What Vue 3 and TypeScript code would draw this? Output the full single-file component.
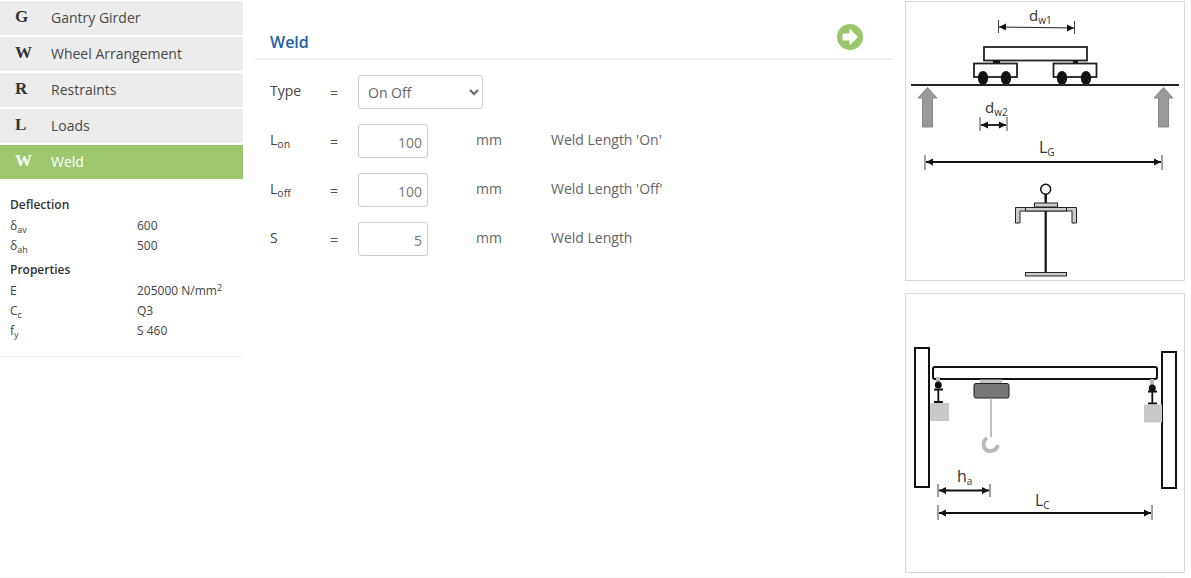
<script setup lang="ts">
type NavItem = { letter: string; label: string; active?: boolean };
type InfoRow = { sym: string; sub?: string; value: string; sup?: string };
type FormRow = { sym: string; sub?: string; value: string; desc: string };

const navItems: NavItem[] = [
  { letter: "G", label: "Gantry Girder" },
  { letter: "W", label: "Wheel Arrangement" },
  { letter: "R", label: "Restraints" },
  { letter: "L", label: "Loads" },
  { letter: "W", label: "Weld", active: true },
];

const deflection: InfoRow[] = [
  { sym: "δ", sub: "av", value: "600" },
  { sym: "δ", sub: "ah", value: "500" },
];

const properties: InfoRow[] = [
  { sym: "E", value: "205000 N/mm", sup: "2" },
  { sym: "C", sub: "c", value: "Q3" },
  { sym: "f", sub: "y", value: "S 460" },
];

const formRows: FormRow[] = [
  { sym: "L", sub: "on", value: "100", desc: "Weld Length 'On'" },
  { sym: "L", sub: "off", value: "100", desc: "Weld Length 'Off'" },
  { sym: "S", value: "5", desc: "Weld Length" },
];
</script>

<template>
  <div class="page">
    <aside class="sidebar">
      <nav class="nav">
        <div
          v-for="item in navItems"
          :key="item.label"
          class="nav-item"
          :class="{ active: item.active }"
        >
          <span class="nav-letter">{{ item.letter }}</span>
          <span>{{ item.label }}</span>
        </div>
      </nav>

      <div class="info">
        <div class="info-title">Deflection</div>
        <div v-for="row in deflection" :key="row.sub" class="info-row">
          <span>{{ row.sym }}<sub>{{ row.sub }}</sub></span>
          <span>{{ row.value }}</span>
        </div>
        <div class="info-title second">Properties</div>
        <div v-for="row in properties" :key="row.sym" class="info-row">
          <span>{{ row.sym }}<sub v-if="row.sub">{{ row.sub }}</sub></span>
          <span>{{ row.value }}<sup v-if="row.sup">{{ row.sup }}</sup></span>
        </div>
      </div>
    </aside>

    <main class="main">
      <header class="main-head">
        <h2>Weld</h2>
        <svg class="next" width="26" height="26" viewBox="0 0 26 26">
          <circle cx="13" cy="13" r="13" fill="#9bc76c" />
          <path
            d="M6 10h7V5.500l7.500 7.500-7.500 7.500V16H6z"
            fill="#fff"
            stroke="#fff"
            stroke-width="1"
            stroke-linejoin="round"
          />
        </svg>
      </header>

      <div class="form">
        <div class="form-row">
          <span class="form-label">Type</span>
          <span class="form-eq">=</span>
          <select class="form-select">
            <option>On Off</option>
          </select>
        </div>
        <div v-for="row in formRows" :key="row.sub ?? row.sym" class="form-row">
          <span class="form-label">{{ row.sym }}<sub v-if="row.sub">{{ row.sub }}</sub></span>
          <span class="form-eq">=</span>
          <input class="form-input" type="text" :value="row.value" />
          <span class="form-unit">mm</span>
          <span class="form-desc">{{ row.desc }}</span>
        </div>
      </div>
    </main>

    <div class="figures">
      <div class="figure">
        <svg viewBox="905 1 280 280" width="280" height="280">
          <defs>
            <marker
              id="tip"
              markerUnits="userSpaceOnUse"
              markerWidth="8"
              markerHeight="8"
              refX="7"
              refY="4"
              orient="auto-start-reverse"
            >
              <path d="M0 0.500L7 4L0 7.500z" fill="#111" />
            </marker>
          </defs>

          <!-- wheel spacing dw1 -->
          <text x="1029" y="21" class="dim">d<tspan class="dim-sub" dy="3">w1</tspan></text>
          <path d="M998.500 20v13M1074.500 21v13" class="tick" />
          <path d="M999 27L1074 28" class="dim-line" marker-start="url(#tip)" marker-end="url(#tip)" />

          <!-- crane on rail -->
          <rect x="984" y="47" width="103" height="13.500" class="outline" />
          <path d="M993 62h7M1073 62h5" stroke="#111" stroke-width="3" />
          <rect x="974" y="63.500" width="43" height="13.500" class="outline" />
          <rect x="1053.500" y="63.500" width="43" height="13.500" class="outline" />
          <ellipse cx="983" cy="78" rx="5.200" ry="7" fill="#111" />
          <ellipse cx="1006" cy="78" rx="5.200" ry="7" fill="#111" />
          <ellipse cx="1062" cy="78" rx="5.200" ry="7" fill="#111" />
          <ellipse cx="1086" cy="78" rx="5.200" ry="7" fill="#111" />
          <path d="M911 85H1179" stroke="#222" stroke-width="2" />

          <!-- supports -->
          <path d="M927.500 87.500l9.500 10.500h-4.500v29h-10V98H918z" class="support" />
          <path d="M1163.500 87.500l9.500 10.500h-4.500v29h-10V98h-4.500z" class="support" />

          <!-- wheel spacing dw2 -->
          <text x="985" y="113" class="dim">d<tspan class="dim-sub" dy="3">w2</tspan></text>
          <path d="M980 117v14M1007 117v14" class="tick" />
          <path d="M981 125H1006" class="dim-line bold" marker-start="url(#tip)" marker-end="url(#tip)" />

          <!-- girder length -->
          <text x="1039" y="153" class="dim big">L<tspan class="dim-sub" dy="3">G</tspan></text>
          <path d="M925 155v15M1162 155v15" class="tick" />
          <path d="M926 162H1161" class="dim-line bold" marker-start="url(#tip)" marker-end="url(#tip)" />

          <!-- girder section -->
          <circle cx="1045.700" cy="189.300" r="5" fill="#fff" stroke="#111" stroke-width="1.500" />
          <path d="M1045.700 194v9" stroke="#111" stroke-width="2.500" />
          <rect x="1034.500" y="203" width="23" height="4" class="steel" />
          <path d="M1015.500 223V207.500H1076.500V223H1072V211H1020V223z" class="steel" />
          <rect x="1025.500" y="207.500" width="41" height="3.500" class="steel" />
          <path d="M1045.700 211V272" stroke="#111" stroke-width="2.200" />
          <rect x="1025.500" y="272.500" width="41" height="3.500" class="steel" />
        </svg>
      </div>

      <div class="figure">
        <svg viewBox="905 293 280 280" width="280" height="280">
          <rect x="915" y="348" width="14" height="139" class="wall" />
          <rect x="1162" y="352" width="14" height="136" class="wall" />
          <rect x="933" y="367" width="224" height="12" rx="2" class="wall" />

          <!-- left end carriage -->
          <rect x="936" y="377" width="4" height="5" fill="#bbb" />
          <circle cx="938.300" cy="385" r="3.500" fill="#111" />
          <path d="M934 389.500H943M938.300 389.500V402M934 402H943" stroke="#111" stroke-width="1.800" />
          <rect x="930" y="403" width="19" height="18" fill="#c9c9c9" />

          <!-- right end carriage -->
          <rect x="1150" y="379" width="4" height="6" fill="#bbb" />
          <circle cx="1152.300" cy="388" r="3.500" fill="#111" />
          <path d="M1148 391.500H1157M1152.300 391.500V403.500M1148 403.500H1157" stroke="#111" stroke-width="1.800" />
          <rect x="1144" y="404.500" width="18" height="18" fill="#c9c9c9" />

          <!-- hoist -->
          <rect x="980" y="379.500" width="22" height="4" fill="#c4c4c4" />
          <rect x="974" y="383.500" width="35" height="14.500" rx="2" fill="#777" stroke="#222" />
          <path d="M991 398V437" stroke="#aaa" stroke-width="1.500" />
          <path d="M987 438C981.500 442 983 451 990 451C994 451 997 449 998 445" fill="none" stroke="#bbb" stroke-width="4" />

          <!-- dimensions -->
          <text x="957" y="482" class="dim big">h<tspan class="dim-sub" dy="3">a</tspan></text>
          <path d="M938 484v13M990 484v13" class="tick" />
          <path d="M939 490.500H989" class="dim-line bold" marker-start="url(#tip)" marker-end="url(#tip)" />
          <text x="1035" y="506" class="dim big">L<tspan class="dim-sub" dy="3">C</tspan></text>
          <path d="M938 505v15M1152 505v15" class="tick" />
          <path d="M939 513H1151" class="dim-line bold" marker-start="url(#tip)" marker-end="url(#tip)" />
        </svg>
      </div>
    </div>
  </div>
</template>

<style>
html,
body {
  margin: 0;
  background: #fff;
}
</style>

<style scoped>
.page {
  display: flex;
  align-items: flex-start;
  width: 1165px;
  height: 578px;
  box-sizing: border-box;
  border-bottom: 1px solid #f3f3f3;
  font-family: "Open Sans", sans-serif;
  color: #555;
}

.sidebar {
  flex: none;
  width: 243px;
  padding-top: 1px;
  padding-bottom: 15px;
  border-bottom: 1px solid #f0f0f0;
}

.nav {
  display: flex;
  flex-direction: column;
  gap: 2px;
}

.nav-item {
  display: flex;
  align-items: center;
  height: 34px;
  box-sizing: border-box;
  padding: 0 0 2px 15px;
  background: #ececec;
  font-size: 14px;
  color: #4a4a4a;
}

.nav-item.active {
  background: #9dc76d;
  color: #fff;
}

.nav-letter {
  width: 36px;
  font-family: "Liberation Serif", serif;
  font-size: 17px;
  font-weight: 700;
  color: #333;
}

.nav-item.active .nav-letter {
  color: #fff;
}

.info {
  padding: 16px 0 0 10px;
  font-size: 12px;
  color: #444;
}

.info-title {
  height: 20px;
  margin-bottom: 1px;
  line-height: 20px;
  font-weight: 600;
  color: #333;
}

.info-title.second {
  margin-top: 4px;
}

.info-row {
  display: grid;
  grid-template-columns: 127px 1fr;
  height: 20px;
  line-height: 20px;
}

sub {
  font-size: 75%;
  line-height: 0;
  vertical-align: -3px;
}

sup {
  font-size: 75%;
  line-height: 0;
  vertical-align: 4px;
}

.main {
  flex: none;
  width: 638px;
  margin-left: 12px;
}

.main-head {
  display: flex;
  align-items: flex-start;
  justify-content: space-between;
  height: 60px;
  box-sizing: border-box;
  padding: 24px 30px 0 15px;
  border-bottom: 2px solid #f0f0f0;
}

.main-head h2 {
  margin: 7px 0 0;
  font-size: 16px;
  line-height: 22px;
  font-weight: 600;
  color: #1c5fa8;
}

.form {
  display: flex;
  flex-direction: column;
  gap: 15px;
  padding: 15px 0 0 15px;
}

.form-row {
  display: flex;
  align-items: center;
  height: 34px;
  font-size: 14px;
  color: #555;
}

.form-label {
  width: 60px;
  padding-bottom: 4px;
  font-weight: 500;
  color: #444;
}

.form-eq {
  width: 28px;
}

.form-select {
  width: 125px;
  height: 34px;
  padding: 0 5px;
  border: 1px solid #ccc;
  border-radius: 3px;
  background: #fff;
  font: inherit;
  color: #666;
}

.form-input {
  width: 70px;
  height: 34px;
  box-sizing: border-box;
  padding: 2px 5px 0;
  border: 1px solid #ccc;
  border-radius: 3px;
  font: inherit;
  color: #777;
  text-align: right;
}

.form-unit {
  width: 75px;
  margin-left: 48px;
  padding-bottom: 4px;
  color: #666;
}

.form-desc {
  padding-bottom: 4px;
  color: #666;
}

.figures {
  flex: none;
  display: flex;
  flex-direction: column;
  gap: 12px;
  width: 280px;
  margin-left: 12px;
  padding-top: 1px;
}

.figure {
  width: 280px;
  height: 280px;
  box-sizing: border-box;
  border: 1px solid #d8d8d8;
  overflow: hidden;
}

.figure svg {
  display: block;
  margin: -1px;
}

.dim {
  font-size: 15px;
  fill: #333;
}

.dim.big {
  font-size: 16px;
}

.dim-sub {
  font-size: 10px;
}

.tick {
  fill: none;
  stroke: #444;
  stroke-width: 1;
}

.dim-line {
  fill: none;
  stroke: #222;
  stroke-width: 1;
}

.dim-line.bold {
  stroke: #111;
  stroke-width: 1.800;
}

.outline {
  fill: #fff;
  stroke: #222;
  stroke-width: 1.800;
}

.support {
  fill: #999;
  stroke: #888;
}

.steel {
  fill: #ccc;
  stroke: #222;
  stroke-width: 1;
}

.wall {
  fill: #fff;
  stroke: #111;
  stroke-width: 2;
}
</style>
